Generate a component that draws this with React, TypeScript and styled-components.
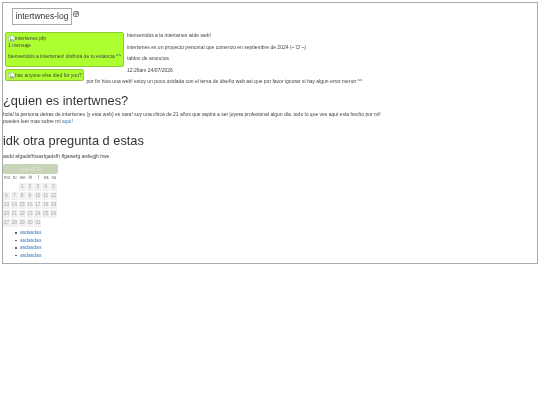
import React from "react";
import styled, { createGlobalStyle } from "styled-components";

const Global = createGlobalStyle`
  html, body { margin: 0; padding: 0; background: #fff; }
  body { font-family: "Liberation Sans", Arial, sans-serif; color: #333; }
`;
const Frame = styled.div`
  margin: 2px;
  width: 536px;
  height: 262px;
  box-sizing: border-box;
  border: 1px solid #aaa;
  overflow: hidden;
  filter: blur(0.3px);
`;
const Header = styled.header`
  display: flex;
  align-items: flex-start;
  padding: 5px 0 0 9px;
  height: 28px;
  box-sizing: border-box;
`;
const Logo = styled.h1`
  margin: 0;
  width: 60px;
  height: 17px;
  box-sizing: border-box;
  border: 1px solid #aaa;
  font-size: 8.5px;
  font-weight: 400;
  line-height: 15px;
  text-align: center;
  white-space: nowrap;
  color: #333;
`;
const Insta = styled.svg`
  width: 6px;
  height: 6px;
  margin: 3px 0 0 0.5px;
`;
const Board = styled.section`
  display: flow-root;
  padding: 0 0 0 2px;
`;
const Post = styled.div`
  float: left;
  clear: left;
  box-sizing: border-box;
  width: ${(p) => p.$w}px;
  height: ${(p) => p.$h}px;
  background: #adff2f;
  border: 1px solid #8fc93a;
  border-radius: 2px;
  padding: 1.5px 2px;
  margin: ${(p) => p.$top}px ${(p) => p.$right}px 2px 0;
  font-size: 5px;
  line-height: 6px;
  color: #444;
`;
const PostLine = styled.div`
  display: flex;
  align-items: center;
  white-space: nowrap;
  margin-bottom: ${(p) => p.$gap || 0}px;
`;
const Broken = styled.svg`
  width: 7px;
  height: 7px;
  flex: none;
`;
const Side = styled.p`
  margin: 0 0 3px;
  font-size: 5px;
  line-height: 8.6px;
  color: #444;
`;
const Heading = styled.h2`
  margin: ${(p) => p.$top}px 0 ${(p) => p.$bottom}px;
  font-size: 12.8px;
  font-weight: 400;
  line-height: 17px;
  color: #333;
`;
const Content = styled.main`
  padding: 3.5px 0 0 0;
`;
const Text = styled.p`
  margin: 0;
  font-size: 5px;
  line-height: 6.6px;
  color: #444;
`;
const Link = styled.a`
  color: #3a7ab8;
  text-decoration: none;
`;
const Calendar = styled.div`
  width: 55px;
  margin: 4px 0 0 0;
`;
const CalTop = styled.div`
  height: 10px;
  border-radius: 2px;
  background: #c8d4b8;
  color: #dfe6d4;
  font-size: 5px;
  line-height: 10px;
  text-align: center;
`;
const Weekdays = styled.div`
  display: grid;
  grid-template-columns: repeat(7, 7.85px);
  height: 9.5px;
`;
const Grid = styled.div`
  display: grid;
  grid-template-columns: repeat(7, 7.85px);
  grid-auto-rows: 9px;
`;
const Weekday = styled.div`
  font-size: 4.6px;
  line-height: 8.5px;
  text-align: center;
  color: #777;
`;
const Cell = styled.div`
  font-size: 4.8px;
  line-height: 8.5px;
  text-align: center;
  color: #aaa;
  background: #f0f0f0;
  border-right: 0.5px solid #fff;
  border-bottom: 0.5px solid #fff;
`;
const Blank = styled.div``;
const List = styled.ul`
  margin: 1px 0 0 0;
  padding: 0 0 0 12px;
  list-style: none;
  font-size: 5px;
  line-height: 7.5px;
`;
const Item = styled.li`
  display: flex;
  align-items: center;
  gap: 3.5px;
`;
const Dot = styled.span`
  width: 1.5px;
  height: 1.5px;
  border-radius: 50%;
  background: #444;
`;

const BrokenIcon = () => (
  <Broken viewBox="0 0 16 16">
    <path d="M1.5 1.5h9l4 4v9h-13z" fill="#fff" stroke="#999" />
    <path d="M3 13l3-5 3 3 2-2 3 4z" fill="#6aa84f" />
    <path d="M3 3h4v4H3z" fill="#9fc5e8" />
  </Broken>
);

const weekdays = ["mo", "tu", "we", "th", "f", "sa", "su"];
const days = Array.from({ length: 31 }, (_, i) => i + 1);

export default function App() {
  return (
    <>
      <Global />
      <Frame>
        <Header>
          <Logo>intertwnes-log</Logo>
          <Insta viewBox="0 0 24 24" fill="none" stroke="#333" strokeWidth="2.4">
            <rect x="2" y="2" width="20" height="20" rx="5" />
            <circle cx="12" cy="12" r="4.5" />
            <circle cx="18" cy="6" r="1" fill="#333" />
          </Insta>
        </Header>
        <Board>
          <Post $w={119} $h={35} $top={1} $right={3}>
            <PostLine><BrokenIcon />intertwnes pfp</PostLine>
            <PostLine $gap={5}>1 mensaje</PostLine>
            <PostLine>bienvenidos a intertwnes! disfruta de tu estancia ^^</PostLine>
          </Post>
          <Side>bienvenidos a la intertwnes wide web!</Side>
          <Side>intertwnes es un proyecto personal que comenzo en septiembre de 2024 (~¨D¨~)</Side>
          <Side>tablon de anuncios</Side>
          <Post $w={79} $h={12} $top={0} $right={2.5}>
            <PostLine><BrokenIcon />has anyone else died for you?</PostLine>
          </Post>
          <Side>12:26am 24/07/2026</Side>
          <Side>por fin hice una web! estoy un poco oxidada con el tema de diseño web asi que por favor ignorar si hay algun error menor ^^</Side>
        </Board>
        <Content>
          <Heading $top={0} $bottom={2}>¿quien es intertwnes?</Heading>
          <Text>hola! la persona detras de intertwnes (y esta web) es sara! soy una chica de 21 años que aspira a ser joyera profesional algun dia. todo lo que ves aqui esta hecho por mi!</Text>
          <Text>puedes leer mas sobre mi <Link href="#">aqui!</Link></Text>
          <Heading $top={7.5} $bottom={4}>idk otra pregunta d estas</Heading>
          <Text>asdd afgadsfhiuasfgadsfh ffgawefg awfegjh hwe</Text>
          <Calendar>
            <CalTop>julio 2026</CalTop>
            <Weekdays>
              {weekdays.map((d) => <Weekday key={d}>{d}</Weekday>)}
            </Weekdays>
            <Grid>
              <Blank /><Blank />
              {days.map((d) => <Cell key={d}>{d}</Cell>)}
            </Grid>
          </Calendar>
          <List>
            {[1, 2, 3, 4].map((i) => <Item key={i}><Dot /><Link href="#">asdasdas</Link></Item>)}
          </List>
        </Content>
      </Frame>
    </>
  );
}
